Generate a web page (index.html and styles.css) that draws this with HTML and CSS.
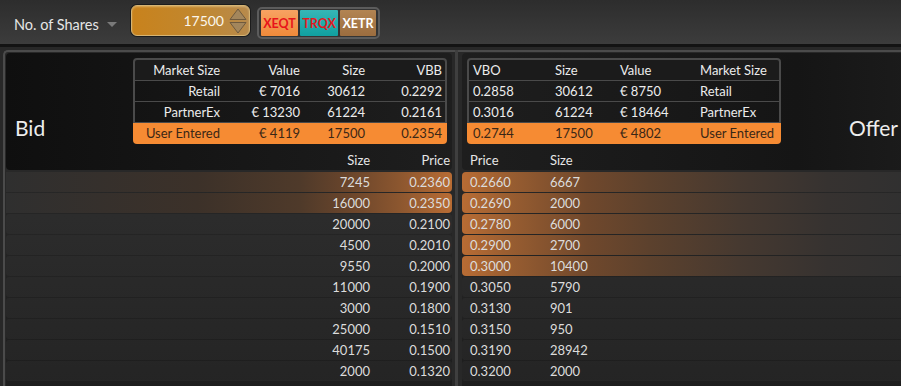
FILE: index.html
```html
<!DOCTYPE html>
<html lang="en">
<head>
    <meta charset="UTF-8">
    <title>Order Book</title>
    <link rel="stylesheet" href="styles.css">
</head>
<body>
    <div class="toolbar">
        <div class="shares-label">No. of Shares</div>
        <span class="caret"></span>
        <div class="spinner">
            <span class="spin-value">17500</span>
            <svg class="spin-arrows" width="18" height="26" viewBox="0 0 18 26">
                <polygon points="9,1 17,11.5 1,11.5" fill="#a3865c" stroke="#6f5a3e" stroke-width="1" />
                <polygon points="1,14.5 17,14.5 9,25" fill="#a3865c" stroke="#6f5a3e" stroke-width="1" />
            </svg>
        </div>
        <div class="venues">
            <button class="venue xeqt">XEQT</button>
            <button class="venue trqx">TRQX</button>
            <button class="venue xetr">XETR</button>
        </div>
    </div>

    <div class="board">
        <!-- Bid side -->
        <div class="side bid">
            <div class="side-head">
                <div class="head-top">
                    <div class="side-label">Bid</div>
                    <div class="summary">
                        <div class="sum-row head"><span>Market Size</span><span>Value</span><span>Size</span><span>VBB</span></div>
                        <div class="sum-row"><span>Retail</span><span>€ 7016</span><span>30612</span><span>0.2292</span></div>
                        <div class="sum-row"><span>PartnerEx</span><span>€ 13230</span><span>61224</span><span>0.2161</span></div>
                        <div class="sum-row user"><span>User Entered</span><span>€ 4119</span><span>17500</span><span>0.2354</span></div>
                    </div>
                </div>
                <div class="level col-heads"><span class="size">Size</span><span class="price">Price</span></div>
            </div>
            <div class="ladder">
                <div class="level hl"><span class="size">7245</span><span class="price">0.2360</span></div>
                <div class="level hl"><span class="size">16000</span><span class="price">0.2350</span></div>
                <div class="level"><span class="size">20000</span><span class="price">0.2100</span></div>
                <div class="level"><span class="size">4500</span><span class="price">0.2010</span></div>
                <div class="level"><span class="size">9550</span><span class="price">0.2000</span></div>
                <div class="level"><span class="size">11000</span><span class="price">0.1900</span></div>
                <div class="level"><span class="size">3000</span><span class="price">0.1800</span></div>
                <div class="level"><span class="size">25000</span><span class="price">0.1510</span></div>
                <div class="level"><span class="size">40175</span><span class="price">0.1500</span></div>
                <div class="level"><span class="size">2000</span><span class="price">0.1320</span></div>
            </div>
        </div>

        <div class="splitter"></div>

        <!-- Offer side -->
        <div class="side offer">
            <div class="side-head">
                <div class="head-top">
                    <div class="summary">
                        <div class="sum-row head"><span>VBO</span><span>Size</span><span>Value</span><span>Market Size</span></div>
                        <div class="sum-row"><span>0.2858</span><span>30612</span><span>€ 8750</span><span>Retail</span></div>
                        <div class="sum-row"><span>0.3016</span><span>61224</span><span>€ 18464</span><span>PartnerEx</span></div>
                        <div class="sum-row user"><span>0.2744</span><span>17500</span><span>€ 4802</span><span>User Entered</span></div>
                    </div>
                    <div class="side-label">Offer</div>
                </div>
                <div class="level col-heads"><span class="price">Price</span><span class="size">Size</span></div>
            </div>
            <div class="ladder">
                <div class="level hl"><span class="price">0.2660</span><span class="size">6667</span></div>
                <div class="level hl"><span class="price">0.2690</span><span class="size">2000</span></div>
                <div class="level hl"><span class="price">0.2780</span><span class="size">6000</span></div>
                <div class="level hl"><span class="price">0.2900</span><span class="size">2700</span></div>
                <div class="level hl"><span class="price">0.3000</span><span class="size">10400</span></div>
                <div class="level"><span class="price">0.3050</span><span class="size">5790</span></div>
                <div class="level"><span class="price">0.3130</span><span class="size">901</span></div>
                <div class="level"><span class="price">0.3150</span><span class="size">950</span></div>
                <div class="level"><span class="price">0.3190</span><span class="size">28942</span></div>
                <div class="level"><span class="price">0.3200</span><span class="size">2000</span></div>
            </div>
        </div>
    </div>
</body>
</html>
```

FILE: styles.css
```css
/* Page */
body {
    margin: 0;
    width: 901px;
    height: 386px;
    overflow: hidden;
    background: #282828;
    font-family: 'Lato', 'Liberation Sans', sans-serif;
    font-size: 13px;
    color: #e2e2e2;
}

/* Toolbar */
.toolbar {
    height: 44px;
    display: flex;
    align-items: center;
    background: linear-gradient(#2d2d2d, #3c3c3c);
    border-bottom: 3px solid #131313;
}

.shares-label {
    width: 86px;
    margin-left: 14px;
    margin-top: 4px;
    font-size: 14.5px;
    white-space: nowrap;
    color: #e6e6e6;
}

.caret {
    width: 0;
    height: 0;
    margin: 4px 0 0 7px;
    border-left: 5px solid transparent;
    border-right: 5px solid transparent;
    border-top: 5px solid #7a7a7a;
}

.spinner {
    box-sizing: border-box;
    width: 119px;
    height: 31px;
    margin: 0 0 3px 14px;
    display: flex;
    justify-content: flex-end;
    align-items: center;
    gap: 5px;
    padding-right: 2px;
    border: 1.5px solid #d6b473;
    border-radius: 6px;
    background: linear-gradient(90deg, #c8821c, #c1872f 55%, #b78a4c);
    box-shadow: 0 0 0 1px #1c1c1c, inset 0 1px 2px rgba(255, 240, 200, 0.35);
}

.spin-value {
    font-size: 14px;
    color: #fbf6ec;
}

/* Venue buttons */
.venues {
    display: flex;
    gap: 2px;
    margin: 2px 0 0 7px;
    padding: 1px 2px;
    border: 2px solid #5c5c5c;
    border-radius: 5px;
    background: #343434;
}

.venue {
    height: 26px;
    padding: 0;
    border: none;
    border-radius: 1px;
    font-family: 'Lato', 'Liberation Sans', sans-serif;
    font-size: 12.5px;
    font-weight: bold;
}

.xeqt {
    width: 37px;
    color: #e8141a;
    background: linear-gradient(#f8a262, #f08a3a);
}

.trqx {
    width: 38px;
    color: #e01a1f;
    background: linear-gradient(#36b6b6, #10a0a0);
}

.xetr {
    width: 36px;
    color: #ffffff;
    background: linear-gradient(#b28452, #9c6d3f);
}

/* Board */
.board {
    display: flex;
    padding: 3px 0 0 3px;
}

.side {
    flex: none;
    border-top: 2px solid #4b4b4b;
}

.side.bid {
    width: 446px;
    padding: 1px 3px 0 1px;
    border-left: 2px solid #4b4b4b;
    border-top-left-radius: 5px;
}

.side.offer {
    width: 446px;
    padding: 1px 0 0 4px;
}

.splitter {
    flex: none;
    width: 3px;
    background: #3f3f3f;
}

.side-head {
    height: 117px;
    box-sizing: border-box;
    padding-top: 5px;
    border-radius: 4px;
}

.bid .side-head {
    background: linear-gradient(90deg, #0f0f0f, #1e1e1e);
}

.offer .side-head {
    background: linear-gradient(90deg, #1e1e1e, #151515 75%, #1b1b1b);
}

.head-top {
    display: flex;
    justify-content: space-between;
    align-items: flex-end;
}

.bid .head-top {
    padding: 0 5px 0 9px;
}

.offer .head-top {
    padding: 0 10px 0 5px;
}

.side-label {
    font-size: 21px;
    line-height: 24px;
    margin-bottom: 4px;
    color: #ededed;
}

/* Summary tables */
.summary {
    width: 314px;
}

.sum-row {
    display: grid;
    height: 20px;
    line-height: 20px;
    border-left: 2px solid #4a4a4a;
    border-right: 2px solid #4a4a4a;
    border-bottom: 1px solid #4a4a4a;
    color: #ececec;
}

.bid .sum-row {
    grid-template-columns: 90px 80px 65px 75px;
    text-align: right;
}

.bid .sum-row span {
    padding-right: 5px;
}

.bid .sum-row span:last-child {
    padding-right: 3px;
}

.offer .sum-row {
    grid-template-columns: 82px 65px 80px 83px;
}

.offer .sum-row span {
    padding-left: 4px;
}

.sum-row.head {
    border-top: 2px solid #4a4a4a;
    border-radius: 4px 4px 0 0;
    background: #1b1b1b;
}

.sum-row.user {
    height: 21px;
    line-height: 21px;
    border-color: transparent;
    border-bottom: none;
    border-radius: 0 0 4px 4px;
    background: #f68b33;
    color: #3a2716;
}

/* Ladder rows */
.level {
    display: flex;
    height: 20px;
    line-height: 20px;
    color: #dcdcdc;
}

.bid .level {
    justify-content: flex-end;
    padding-right: 2px;
}

.offer .level {
    padding-left: 8px;
}

.bid .level span {
    text-align: right;
}

.level .size {
    width: 60px;
}

.level .price {
    width: 80px;
}

.col-heads {
    height: 16px;
    line-height: 16px;
    margin-top: 8px;
    color: #e6e6e6;
}

.ladder {
    margin-top: 2px;
    height: 220px;
    display: flex;
    flex-direction: column;
    gap: 1px;
    background: linear-gradient(#272727, #1d1d1d);
}

.ladder .level {
    border-radius: 3px;
    background: rgba(255, 255, 255, 0.035);
}

.bid .ladder .hl {
    border-radius: 0 4px 4px 0;
    background: linear-gradient(90deg, #2f2f2f 0%, #3c3129 43%, #4f3a2a 66%, #6a452b 77%, #8b562f 88%, #b86c34 100%);
}

.offer .ladder .hl {
    border-radius: 4px 0 0 4px;
    background: linear-gradient(90deg, #b86c34 0%, #9a5e31 10%, #70482c 28%, #5c412d 42%, #463930 62%, #363230 82%, #303030 100%);
}
```
